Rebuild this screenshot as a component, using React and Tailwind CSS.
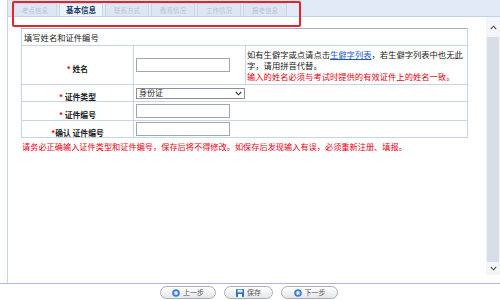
import React from "react";

const tabs = ["考点信息", "基本信息", "联系方式", "教育情况", "工作情况", "报考信息"];

function Label({ children, star = "* " }) {
  return (
    <span className="font-bold text-[7.8px] text-[#222]">
      <span className="text-[#e60012]">{star}</span>
      {children}
    </span>
  );
}

function Input({ w = "w-[94px]" }) {
  return <div className={`${w} h-[14px] border border-[#9fa6ad] bg-white`} />;
}

function BtnIcon({ kind }) {
  if (kind === "save") {
    return (
      <svg width="8" height="8" viewBox="0 0 8 8">
        <rect x="0" y="0" width="8" height="8" rx="0.8" fill="#2f6fc4" />
        <rect x="1.5" y="0.6" width="5" height="2.8" fill="#dfe9f7" />
        <rect x="2" y="5" width="4" height="3" fill="#ffffff" />
      </svg>
    );
  }
  return (
    <svg width="8" height="8" viewBox="0 0 8 8">
      <circle cx="4" cy="4" r="3.8" fill="#3a7bd5" />
      <circle cx="4" cy="4" r="2.2" fill="#9cc3f0" />
      <path d={kind === "prev" ? "M2.3 4 L4.8 2.3 L4.8 5.7 Z" : "M5.7 4 L3.2 2.3 L3.2 5.7 Z"} fill="#ffffff" />
    </svg>
  );
}

function Btn({ kind, label, w }) {
  return (
    <div
      className={`${w} h-[13px] rounded-full border border-[#a9adb3] bg-gradient-to-b from-white to-[#e4e6ea] flex items-center justify-center gap-[3px] text-[7px] text-[#555]`}
    >
      <BtnIcon kind={kind} />
      <span>{label}</span>
    </div>
  );
}

export default function App() {
  return (
    <div className="w-[500px] h-[300px] bg-white relative overflow-hidden font-['Noto_Sans_CJK_SC','Noto_Sans',sans-serif] text-[#222] leading-none">
      <div className="flex h-[283px]">
        <div className="w-[8px] border-r border-[#c9d6e6] shrink-0" />
        <div className="flex-1 flex flex-col min-w-0">
          {/* tab strip */}
          <div className="h-[17px] bg-[#e1eaf6] border-b border-[#c2d2e8] flex items-end pl-[5px] gap-[2px] shrink-0">
            {tabs.map((t, i) => (
              <div
                key={t}
                className={`w-[44px] h-[13px] flex items-center justify-center border-x border-t border-[#c9d7ea] ${
                  i === 1
                    ? "bg-[#eef4fb] text-[#1d3b6e] font-bold text-[7.5px]"
                    : "bg-[#dde7f4] text-[#b7c4d7] text-[6.5px]"
                }`}
              >
                {t}
              </div>
            ))}
          </div>
          <div className="flex flex-1 min-h-0">
            {/* content */}
            <div className="flex-1 pl-[13px] pt-[11px]">
              <table className="border-collapse w-[446px] table-fixed">
                <colgroup>
                  <col className="w-[112px]" />
                  <col className="w-[112px]" />
                  <col className="w-[222px]" />
                </colgroup>
                <tbody>
                  <tr className="h-[17px]">
                    <td colSpan={3} className="border border-[#c8d5e6] border-t-[#9fb3cc] pl-[2px] text-[8.3px] align-middle">
                      填写姓名和证件编号
                    </td>
                  </tr>
                  <tr className="h-[39px]">
                    <td className="border border-[#c8d5e6] text-center align-middle">
                      <Label>姓名</Label>
                    </td>
                    <td className="border border-[#c8d5e6] pl-[2px] align-middle">
                      <Input />
                    </td>
                    <td className="border border-[#c8d5e6] pl-[1px] align-middle text-[8.3px] leading-[11px] whitespace-nowrap">
                      如有生僻字或点请点击
                      <span className="text-[#1a56c8] underline">生僻字列表</span>
                      ，若生僻字列表中也无此
                      <br />
                      字，请用拼音代替。
                      <br />
                      <span className="text-[#e60012]">输入的姓名必须与考试时提供的有效证件上的姓名一致。</span>
                    </td>
                  </tr>
                  <tr className="h-[16px]">
                    <td className="border border-[#c8d5e6] text-center align-middle">
                      <Label>证件类型</Label>
                    </td>
                    <td colSpan={2} className="border border-[#c8d5e6] pl-[2px] align-middle">
                      <div className="w-[109px] h-[11px] border border-[#8a8f95] bg-white flex items-center justify-between pl-[2px] pr-[2px] text-[8px]">
                        <span>身份证</span>
                        <svg width="7" height="5" viewBox="0 0 7 5">
                          <path d="M0.8 1 L3.5 3.8 L6.2 1" stroke="#333" strokeWidth="1.1" fill="none" />
                        </svg>
                      </div>
                    </td>
                  </tr>
                  <tr className="h-[19px]">
                    <td className="border border-[#c8d5e6] text-center align-middle">
                      <Label>证件编号</Label>
                    </td>
                    <td colSpan={2} className="border border-[#c8d5e6] pl-[2px] align-middle">
                      <Input />
                    </td>
                  </tr>
                  <tr className="h-[17px]">
                    <td className="border border-[#c8d5e6] text-center align-middle">
                      <Label star="*">确认 证件编号</Label>
                    </td>
                    <td colSpan={2} className="border border-[#c8d5e6] pl-[2px] align-middle">
                      <Input />
                    </td>
                  </tr>
                </tbody>
              </table>
              <div className="mt-[4px] pl-[1px] text-[8.2px] text-[#e60012] whitespace-nowrap">
                请务必正确输入证件类型和证件编号，保存后将不得修改。如保存后发现输入有误，必须重新注册、填报。
              </div>
            </div>
            {/* scrollbar */}
            <div className="w-[14px] h-[258px] flex flex-col shrink-0 bg-[#f3f5f8]">
              <div className="h-[20px] flex items-center justify-center">
                <svg width="7" height="5" viewBox="0 0 7 5">
                  <path d="M0.8 4 L3.5 1.2 L6.2 4" stroke="#555" strokeWidth="1.1" fill="none" />
                </svg>
              </div>
              <div className="flex-1 bg-[#d7dee7] mx-[1px]" />
              <div className="h-[13px] flex items-center justify-center">
                <svg width="7" height="5" viewBox="0 0 7 5">
                  <path d="M0.8 1 L3.5 3.8 L6.2 1" stroke="#555" strokeWidth="1.1" fill="none" />
                </svg>
              </div>
            </div>
          </div>
        </div>
      </div>
      {/* bottom bar */}
      <div className="h-[17px] border-t border-[#aeb6dc] flex justify-center gap-[8px] pt-[2px] pr-[2px]">
        <Btn kind="prev" label="上一步" w="w-[56px]" />
        <Btn kind="save" label="保存" w="w-[49px]" />
        <Btn kind="next" label="下一步" w="w-[57px]" />
      </div>
      {/* red annotation box */}
      <div className="absolute left-[12px] top-[1px] w-[289px] h-[26px] border-2 border-[#e2252b] rounded-[2px]" />
    </div>
  );
}
